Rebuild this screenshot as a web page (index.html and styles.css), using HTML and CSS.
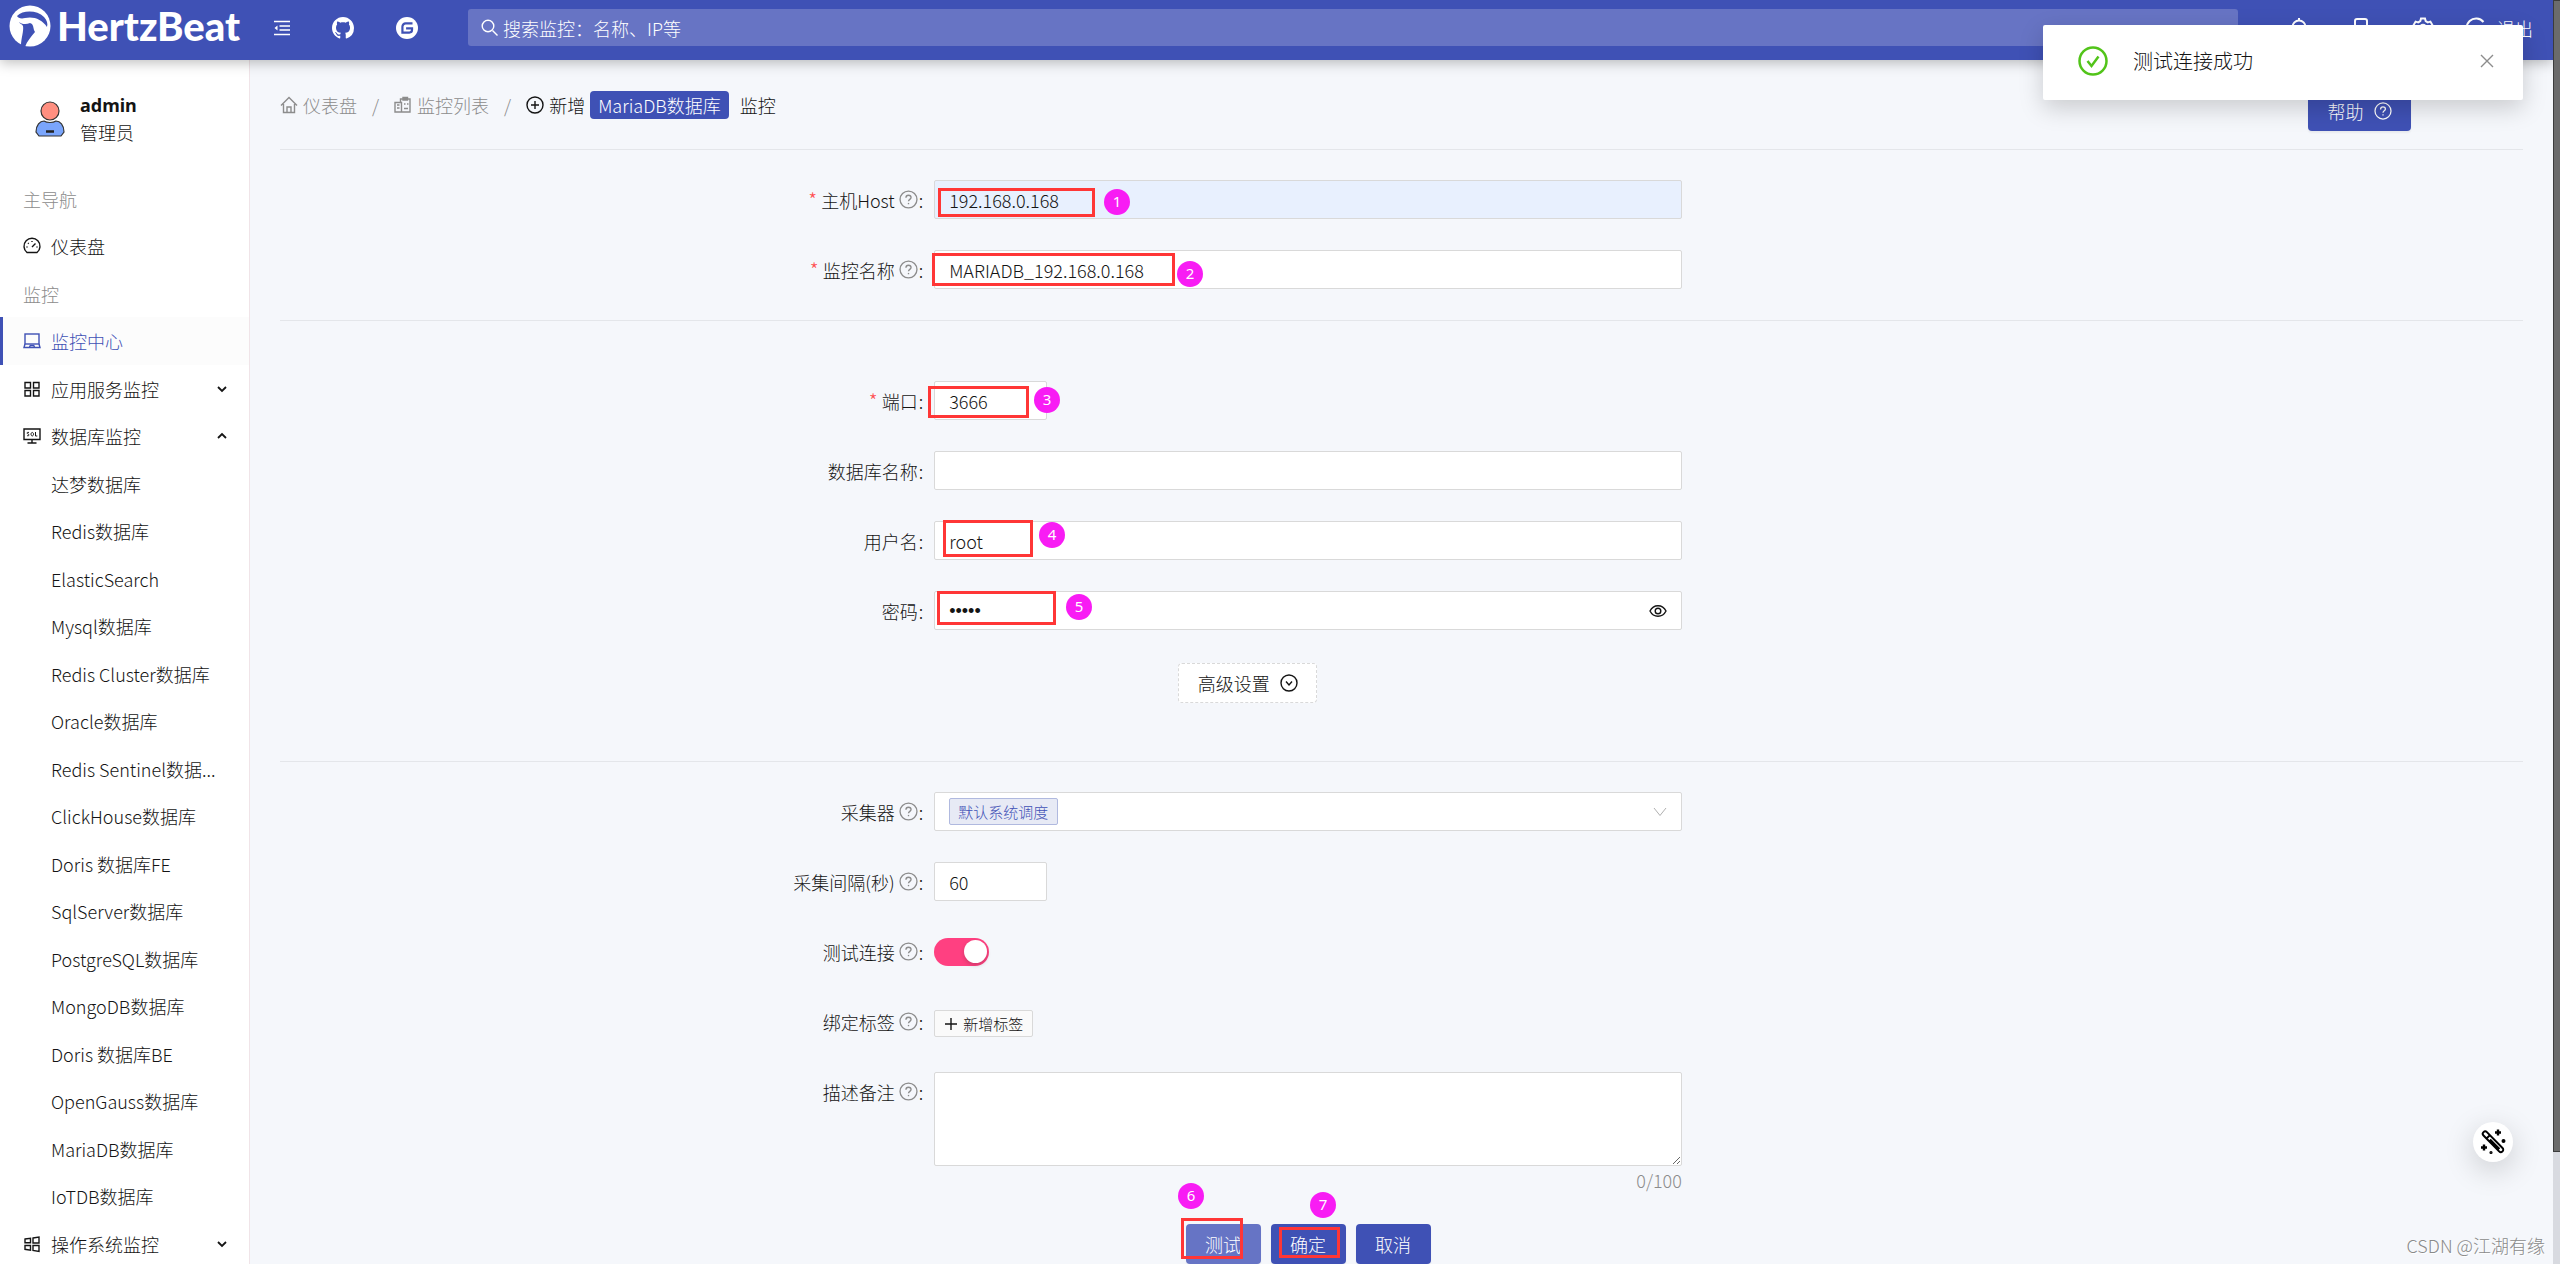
FILE: index.html
```html
<!DOCTYPE html>
<html lang="zh-CN">
<head>
<meta charset="utf-8">
<meta name="viewport" content="width=device-width, initial-scale=1">
<title>HertzBeat</title>
<link rel="stylesheet" href="styles.css">
</head>
<body>
<svg class="sprite" aria-hidden="true">
  <symbol id="i-help" viewBox="0 0 20 20"><circle cx="10" cy="10" r="8.900"/><path d="M7.300 8.200c0-1.700 1.200-2.700 2.700-2.700s2.700 1 2.700 2.400c0 1.900-2.700 2-2.700 4"/><path d="M10 13.600v1.400"/></symbol>
  <symbol id="i-down" viewBox="0 0 12 12"><path d="M2 4l4 4 4-4"/></symbol>
  <symbol id="i-wide" viewBox="0 0 14 12"><path d="M1 2l6 7.500L13 2"/></symbol>
  <symbol id="i-up" viewBox="0 0 12 12"><path d="M2 8l4-4 4 4"/></symbol>
</svg>

<header class="topbar">
  <a class="brand" href="#" aria-label="HertzBeat">
    <svg class="brand-mark" viewBox="0 0 42 42"><circle cx="21" cy="21" r="20.500" fill="#fff"/><path d="M8 11C14 5 28 5 35 12c3 3 4 7 3 10-5-8-14-11-22-9-4 1-7 0-8-2z" fill="#3f51b5"/><path d="M10 17c2 2 7 3 11 1l2 1c2 3 1 5 3 8-4 5-8 9-10 15l-4-1c0-8 3-15 2-20-1-2-3-2-4-4z" fill="#3f51b5"/></svg>
    <span class="brand-name">HertzBeat</span>
  </a>
  <nav class="tools" aria-label="工具">
    <button type="button" aria-label="收起菜单"><svg class="ic16" viewBox="0 0 16 16"><path d="M0 1.500h16M5.500 6H16M5.500 10H16M0 14.500h16" fill="none" stroke="#fff" stroke-width="1.500"/><path d="M3.500 5.500v5L.5 8z" fill="#fff"/></svg></button>
    <a href="#" aria-label="GitHub"><svg class="ic22" viewBox="0 0 16 16"><path fill="#fff" d="M8 0C3.580 0 0 3.580 0 8c0 3.540 2.290 6.530 5.470 7.590.4.070.55-.17.55-.38 0-.19-.01-.82-.01-1.490-2.010.37-2.530-.49-2.690-.94-.09-.23-.48-.94-.82-1.130-.28-.15-.68-.52-.01-.53.63-.01 1.080.58 1.230.82.72 1.210 1.870.87 2.330.66.07-.52.28-.87.51-1.070-1.780-.2-3.640-.89-3.640-3.950 0-.87.31-1.590.82-2.150-.08-.2-.36-1.020.08-2.120 0 0 .67-.21 2.200.82.64-.18 1.320-.27 2-.27s1.360.09 2 .27c1.530-1.040 2.200-.82 2.200-.82.44 1.100.16 1.920.08 2.120.51.56.82 1.270.82 2.150 0 3.070-1.870 3.750-3.650 3.950.29.25.54.73.54 1.480 0 1.070-.01 1.930-.01 2.200 0 .21.15.46.55.38A8 8 0 0 0 16 8c0-4.420-3.580-8-8-8z"/></svg></a>
    <a href="#" aria-label="Gitee"><svg class="ic22" viewBox="0 0 24 24"><circle cx="12" cy="12" r="12" fill="#fff"/><path d="M18 7h-7.500A3.500 3.500 0 0 0 7 10.500V17h7.500a3 3 0 0 0 3-3v-1.500H11" fill="none" stroke="#3f51b5" stroke-width="2.400"/></svg></a>
  </nav>
  <label class="search">
    <svg class="ic18" viewBox="0 0 18 18"><circle cx="7" cy="7" r="5.800"/><path d="M11.500 11.500l5 5"/></svg>
    <input type="search" placeholder="搜索监控：名称、IP等" aria-label="搜索监控">
  </label>
  <nav class="account" aria-label="账户">
    <div class="icons">
      <a href="#" aria-label="通知"><svg class="ic22" viewBox="0 0 22 22"><path d="M11 1v2M4.500 17V10a6.500 6.500 0 0 1 13 0v7M2 17.500h18"/></svg></a>
      <a href="#" aria-label="手机"><svg class="ic22" viewBox="0 0 22 22"><rect x="5" y="2" width="12" height="18" rx="2"/></svg></a>
      <a href="#" aria-label="设置"><svg class="ic22" viewBox="0 0 22 22"><path d="M9 1.500h4l.7 2.700 2 1.200 2.700-.8 2 3.400-2 2v2l2 2-2 3.400-2.700-.8-2 1.200-.7 2.700H9l-.7-2.700-2-1.200-2.700.8-2-3.400 2-2v-2l-2-2 2-3.400 2.700.8 2-1.200z"/><circle cx="11" cy="11" r="3.200"/></svg></a>
    </div>
    <a class="logout" href="#"><svg class="ic22" viewBox="0 0 22 22"><path d="M18.500 5a9.500 9.500 0 1 0 0 12M10 11h11"/></svg>退出</a>
  </nav>
</header>

<div class="body">
  <aside class="side">
    <div class="user">
      <svg class="avatar" viewBox="0 0 30 36"><circle cx="15" cy="10" r="9" fill="#ff8f80" stroke="#333" stroke-width="1.200"/><path d="M1 31c0-7 4-11 8-11 3 2 9 2 12 0 4 0 8 4 8 11l-3 4H4z" fill="#7aa5fb" stroke="#333" stroke-width="1.200"/><path d="M11 30.500h8" stroke="#222" stroke-width="2.500"/></svg>
      <div><strong>admin</strong><span>管理员</span></div>
    </div>
    <ul class="menu">
      <li class="group">主导航</li>
      <li><a href="#"><svg class="ic18" viewBox="0 0 18 18"><path d="M4 15.500a8 8 0 1 1 10 0zM9 10l3.500-3.500M3.500 10h1M13.500 10h1M9 4v1M5 6l.7.7"/></svg>仪表盘</a></li>
      <li class="group">监控</li>
      <li class="active"><a href="#"><svg class="ic18" viewBox="0 0 18 18"><rect x="2" y="2" width="14" height="10"/><path d="M2 12l-1 3.500h16L16 12M6.500 15l.8-1.500h3.400l.8 1.500"/></svg>监控中心</a></li>
      <li><a href="#"><svg class="ic18" viewBox="0 0 18 18"><path d="M2 2.500h5.500V8H2zM10.500 2.500H16V8h-5.500zM2 10.500h5.500V16H2zM10.500 10.500H16V16h-5.500z"/></svg>应用服务监控<svg class="chev"><use href="#i-down"/></svg></a></li>
      <li><a href="#"><svg class="ic18" viewBox="0 0 18 18"><path d="M1 2h16v10.500H1zM9 12.500V16M4.500 16h9"/><path d="M6 5.500c-1.500-.5-2 0-1.800.8.2.8 1.800.6 1.800 1.700 0 .8-1.200 1-2 .5M8 7.200c0-2.300 2.500-2.300 2.500 0s-2.500 2.300-2.500 0M12.500 5v4h1.800" stroke-width="1"/></svg>数据库监控<svg class="chev"><use href="#i-up"/></svg></a></li>
      <li><a class="sub" href="#">达梦数据库</a></li>
      <li><a class="sub" href="#">Redis数据库</a></li>
      <li><a class="sub" href="#">ElasticSearch</a></li>
      <li><a class="sub" href="#">Mysql数据库</a></li>
      <li><a class="sub" href="#">Redis Cluster数据库</a></li>
      <li><a class="sub" href="#">Oracle数据库</a></li>
      <li><a class="sub" href="#">Redis Sentinel数据...</a></li>
      <li><a class="sub" href="#">ClickHouse数据库</a></li>
      <li><a class="sub" href="#">Doris 数据库FE</a></li>
      <li><a class="sub" href="#">SqlServer数据库</a></li>
      <li><a class="sub" href="#">PostgreSQL数据库</a></li>
      <li><a class="sub" href="#">MongoDB数据库</a></li>
      <li><a class="sub" href="#">Doris 数据库BE</a></li>
      <li><a class="sub" href="#">OpenGauss数据库</a></li>
      <li><a class="sub" href="#">MariaDB数据库</a></li>
      <li><a class="sub" href="#">IoTDB数据库</a></li>
      <li><a href="#"><svg class="ic18" viewBox="0 0 18 18"><path d="M2 4l5.500-.8v4.600H2zM10 3l6-1v6h-6zM2 10.500h5.500v4.600L2 14.300zM10 10.500h6v6l-6-1z"/></svg>操作系统监控<svg class="chev"><use href="#i-down"/></svg></a></li>
    </ul>
  </aside>

  <main class="main">
    <div class="head">
      <nav class="crumbs" aria-label="面包屑">
        <a href="#"><svg class="ic18" viewBox="0 0 18 18"><path d="M1 9.500L9 1.500l8 8M3.500 8v8.500h11V8M7 16.500V11h4v5.500"/></svg>仪表盘</a>
        <span class="sep">/</span>
        <a href="#"><svg class="ic18" viewBox="0 0 18 18"><path d="M6.500 6V3H16v13H1V6.500h6.500V16M9 1.500h4.500V4H9zM3 9h2.500M3 12h2.500M10 8h1.500M13 8h1.500M10 12.500h4"/></svg>监控列表</a>
        <span class="sep">/</span>
        <span class="here"><svg class="ic18" viewBox="0 0 18 18"><circle cx="9" cy="9" r="8"/><path d="M9 5v8M5 9h8"/></svg>新增<b class="pill">MariaDB数据库</b>监控</span>
      </nav>
      <button class="btn help" type="button">帮助<svg class="ic18"><use href="#i-help"/></svg></button>
    </div>

    <form class="form">
      <section class="block">
        <div class="row"><label class="lab req" for="host">主机Host<svg class="q"><use href="#i-help"/></svg></label><input class="inp filled" id="host" type="text" value="192.168.0.168"></div>
        <div class="row"><label class="lab req" for="name">监控名称<svg class="q"><use href="#i-help"/></svg></label><input class="inp" id="name" type="text" value="MARIADB_192.168.0.168"></div>
      </section>
      <section class="block params">
        <div class="row"><label class="lab req" for="port">端口</label><input class="inp short" id="port" type="text" value="3666"></div>
        <div class="row"><label class="lab" for="db">数据库名称</label><input class="inp" id="db" type="text"></div>
        <div class="row"><label class="lab" for="user">用户名</label><input class="inp" id="user" type="text" value="root"></div>
        <div class="row"><label class="lab" for="pwd">密码</label><div class="inp pwd"><input id="pwd" type="password" value="admin"><button type="button" aria-label="显示密码"><svg class="ic18" viewBox="0 0 18 18"><path d="M1 9c3.500-7 12.500-7 16 0-3.500 7-12.500 7-16 0z"/><circle cx="9" cy="9" r="2.800"/></svg></button></div></div>
        <div class="row"><div class="ctl adv"><button class="more" type="button">高级设置<svg class="ic18" viewBox="0 0 18 18"><circle cx="9" cy="9" r="8"/><path d="M6 7.500l3 3.500 3-3.500"/></svg></button></div></div>
      </section>
      <section class="block last">
        <div class="row"><label class="lab" for="collector">采集器<svg class="q"><use href="#i-help"/></svg></label><div class="inp sel"><select id="collector"><option>默认系统调度</option></select><svg class="arrow"><use href="#i-wide"/></svg></div></div>
        <div class="row"><label class="lab" for="gap">采集间隔(秒)<svg class="q"><use href="#i-help"/></svg></label><input class="inp short" id="gap" type="text" value="60"></div>
        <div class="row"><label class="lab" for="detect">测试连接<svg class="q"><use href="#i-help"/></svg></label><div class="ctl"><input class="switch" id="detect" type="checkbox" checked></div></div>
        <div class="row"><label class="lab" for="tag">绑定标签<svg class="q"><use href="#i-help"/></svg></label><div class="ctl"><button class="addtag" id="tag" type="button"><svg class="plus" viewBox="0 0 14 14"><path d="M7 1v12M1 7h12"/></svg>新增标签</button></div></div>
        <div class="row"><label class="lab" for="desc">描述备注<svg class="q"><use href="#i-help"/></svg></label><div class="note"><textarea class="inp" id="desc"></textarea><span class="count">0/100</span></div></div>
        <div class="row"><div class="ctl actions"><button class="btn busy" type="button">测试</button><button class="btn" type="submit">确定</button><button class="btn" type="button">取消</button></div></div>
      </section>
    </form>
  </main>
</div>

<div class="toast" role="status">
  <svg class="ok" viewBox="0 0 30 30"><circle cx="15" cy="15" r="13.500"/><path d="M9.500 15l4 5 7-9.500"/></svg>
  <span>测试连接成功</span>
  <button type="button" aria-label="关闭"><svg class="x" viewBox="0 0 14 14"><path d="M1 1l12 12M13 1L1 13"/></svg></button>
</div>

<button class="wand" type="button" aria-label="主题"><svg viewBox="0 0 26 26"><path d="M3.500 6.500a2.400 2.400 0 0 1 3.400-3.400L22.500 19a2.400 2.400 0 0 1-3.400 3.400zM6.500 9.500l3.400-3.400M10 10.500l9.500 9.500"/><path d="M18 .5v6M15 3.500h6M4 15.500v6M1 18.500h6" stroke-width="2.400"/><circle cx="23.500" cy="12" r="1" fill="#000"/><circle cx="11" cy="23.500" r=".6" fill="#000"/></svg></button>
<div class="track"><div class="thumb"></div></div>

<div class="marks">
  <i class="box b1"></i><i class="num n1">1</i>
  <i class="box b2"></i><i class="num n2">2</i>
  <i class="box b3"></i><i class="num n3">3</i>
  <i class="box b4"></i><i class="num n4">4</i>
  <i class="box b5"></i><i class="num n5">5</i>
  <i class="box b6"></i><i class="num n6">6</i>
  <i class="box b7"></i><i class="num n7">7</i>
  <span class="credit">CSDN @江湖有缘</span>
</div>
</body>
</html>
```
FILE: styles.css
```css
* { box-sizing: border-box; }
html, body { height: 100%; }
body {
  margin: 0;
  position: relative;
  padding-right: 7px;
  overflow: hidden;
  background: #f5f7fb;
  color: #141414;
  font: 300 18px/28px "Noto Sans CJK SC", "Noto Sans", sans-serif;
}
a { color: inherit; text-decoration: none; }
button, input, select, textarea { font: inherit; color: inherit; }
button { margin: 0; padding: 0; border: 0; background: none; cursor: pointer; }
ul { margin: 0; padding: 0; list-style: none; }
svg { flex: none; fill: none; stroke: currentColor; stroke-width: 1.4; }
.sprite { position: absolute; width: 0; height: 0; }
.ic16 { width: 16px; height: 16px; stroke: none; }
.ic18 { width: 18px; height: 18px; }
.ic22 { width: 22px; height: 22px; }

/* top bar */
.topbar {
  position: relative;
  z-index: 1;
  display: flex;
  align-items: flex-start;
  height: 60px;
  padding-left: 9px;
  background: #3f51b5;
  color: #fff;
  box-shadow: 0 3px 12px rgba(0, 0, 0, .25);
}
.brand { display: flex; gap: 6px; align-items: center; width: 265px; height: 52px; }
.brand svg { stroke: none; }
.brand-mark { width: 42px; height: 42px; }
.brand-name { font: 900 40px/52px Lato, sans-serif; }
.tools { display: flex; gap: 42px; align-items: center; width: 194px; height: 56px; }
.tools svg { display: block; }
.tools a svg { stroke: none; }
.search {
  display: flex;
  flex: 1;
  gap: 4px;
  align-items: center;
  height: 37px;
  margin-top: 9px;
  padding: 0 13px;
  border-radius: 3px;
  background: #6774c4;
}
.search input { flex: 1; padding: 0; border: 0; outline: 0; background: none; }
.search input::placeholder { color: #fff; opacity: 1; }
.account { display: flex; gap: 31px; align-items: center; height: 56px; padding: 0 20px 0 50px; }
.icons { display: flex; gap: 40px; }
.account svg { display: block; stroke-width: 2; }
.logout { display: flex; gap: 10px; }
.logout svg { margin-top: 3px; }

/* side menu */
.body { display: flex; }
.side { width: 250px; border-right: 1px solid #f0e4e8; background: #fff; }
.user { display: flex; gap: 15px; align-items: center; height: 115px; padding: 2px 0 0 35px; }
.user > div { display: grid; }
.user strong { font: 700 18px/26px "Noto Sans", sans-serif; }
.avatar { width: 30px; height: 36px; }
.menu li { display: flex; height: 47px; }
.menu li:nth-child(even) { height: 48px; }
.menu a { display: flex; flex: 1; gap: 10px; align-items: center; padding: 0 21px 0 23px; }
.menu .sub { padding-left: 51px; }
.menu .group { align-items: center; padding-left: 23px; color: #8c8c8c; }
.menu .active { border-left: 3px solid #3f51b5; background: #fcfcfc; color: #3f51b5; }
.menu .active a { padding-left: 20px; }
.chev { width: 12px; height: 12px; margin-left: auto; stroke-width: 1.8; }

/* page head */
.main { flex: 1; padding: 0 30px; }
.head {
  display: flex;
  justify-content: space-between;
  align-items: center;
  height: 90px;
  border-bottom: 1px solid #e4e6ea;
}
.crumbs { display: flex; gap: 15px; align-items: center; }
.crumbs a, .here { display: flex; gap: 5px; align-items: center; color: #8c8c8c; }
.crumbs .here { color: #141414; }
.sep { color: #8c8c8c; }
.pill { margin-right: 6px; padding: 0 8px; border-radius: 4px; background: #3f51b5; color: #fff; font-weight: 300; }
.btn {
  width: 75px;
  height: 40px;
  border-radius: 4px;
  background: #3f51b5;
  color: #fff;
  box-shadow: 0 2px 2px rgba(0, 0, 0, .05);
}
.help { display: flex; gap: 10px; justify-content: center; align-items: center; width: 103px; margin: 12px 112px 0 0; }

/* form */
.block { display: grid; gap: 31px; padding: 30px 0 31px; border-bottom: 1px solid #e4e6ea; }
.params { padding: 60px 0 58px; }
.last { border: 0; }
.row { display: grid; grid-template-columns: 7fr 8fr 9fr; min-height: 39px; }
.lab { display: flex; gap: 4px; justify-content: flex-end; align-items: center; height: 39px; padding-right: 11px; }
.lab::after { content: ":"; margin-left: -3px; }
.req::before { content: "*"; color: #ff4d4f; font-size: 20px; }
.q { width: 19px; height: 19px; color: #8c8c8c; }
.inp {
  width: 100%;
  height: 39px;
  padding: 0 14px;
  border: 1px solid #d9d9d9;
  border-radius: 2px;
  outline: 0;
  background: #fff;
}
.filled { background: #e8f0fe; }
.short { width: 113px; }
.pwd, .sel { display: flex; align-items: center; justify-content: space-between; }
.pwd input { flex: 1; padding: 0; border: 0; outline: 0; background: none; font-family: "Liberation Sans", sans-serif; }
.pwd svg { display: block; }
.ctl { display: flex; grid-column: 2; align-items: center; }
.adv { padding: 2px 0 0 244px; }
.more {
  display: flex;
  gap: 10px;
  justify-content: center;
  align-items: center;
  width: 139px;
  height: 40px;
  border: 1px dashed #d9d9d9;
  border-radius: 4px;
  background: #fff;
}
.sel select {
  height: 27px;
  padding: 0 8px;
  border: 1px solid #b0b9df;
  border-radius: 2px;
  background: #e7eaf5;
  color: #3f51b5;
  font-size: 15px;
  line-height: 24px;
  appearance: none;
}
.arrow { width: 14px; height: 12px; color: #b0b0b0; stroke-width: 1; }
.switch {
  display: flex;
  align-items: center;
  width: 55px;
  height: 28px;
  margin: 0;
  padding: 0 2px;
  border-radius: 14px;
  background: #ff4081;
  appearance: none;
}
.switch::before {
  content: "";
  width: 23px;
  height: 23px;
  margin-left: auto;
  border-radius: 50%;
  background: #fff;
  box-shadow: 0 2px 4px rgba(0, 35, 11, .2);
}
.addtag {
  display: flex;
  gap: 5px;
  align-items: center;
  height: 27px;
  margin-top: 4px;
  padding: 0 9px;
  border: 1px solid #d9d9d9;
  border-radius: 2px;
  background: #fafafa;
  font-size: 15px;
}
.plus { width: 14px; height: 14px; }
.note { display: grid; justify-items: end; }
.note textarea { display: block; height: 94px; resize: vertical; }
.count { height: 27px; color: #8c8c8c; }
.actions { gap: 10px; justify-content: center; }
.busy { background: #6674c5; }

/* floating layers */
.toast {
  position: absolute;
  z-index: 2;
  top: 25px;
  right: 37px;
  display: flex;
  gap: 25px;
  align-items: center;
  width: 480px;
  height: 75px;
  padding: 0 29px 4px 35px;
  border-radius: 2px;
  background: #fff;
  font-size: 20px;
  box-shadow: 0 8px 24px rgba(0, 0, 0, .18);
}
.toast svg { display: block; }
.ok { width: 30px; height: 30px; color: #52c41a; stroke-width: 2.5; }
.x { width: 14px; height: 14px; color: #8c8c8c; }
.toast button { margin-left: auto; }
.wand {
  position: absolute;
  right: 47px;
  bottom: 102px;
  display: grid;
  place-items: center;
  width: 40px;
  height: 40px;
  border-radius: 50%;
  background: #fff;
  color: #000;
  box-shadow: 0 8px 30px rgba(0, 0, 0, .18);
}
.wand svg { width: 26px; height: 26px; stroke-width: 2; }
.track { position: absolute; z-index: 2; top: 0; right: 0; width: 7px; height: 100%; background: #d8dae0; }
.thumb { height: 1152px; border: 1px solid #3c3c3c; border-right: 0; background: #6b6b6b; }

/* numbered marks over the form */
.marks { position: absolute; z-index: 3; inset: 0; pointer-events: none; }
.box { position: absolute; border: 3px solid #ff3636; }
.num {
  position: absolute;
  width: 26px;
  height: 26px;
  border-radius: 50%;
  background: #f81cf4;
  color: #fff;
  font: 400 15px/25px "Noto Sans", sans-serif;
  text-align: center;
}
.b1 { left: 938px; top: 188px; width: 157px; height: 29px; }
.n1 { left: 1104px; top: 189px; }
.b2 { left: 932px; top: 253px; width: 243px; height: 33px; }
.n2 { left: 1177px; top: 261px; }
.b3 { left: 928px; top: 386px; width: 101px; height: 32px; }
.n3 { left: 1034px; top: 387px; }
.b4 { left: 943px; top: 520px; width: 90px; height: 37px; }
.n4 { left: 1039px; top: 522px; }
.b5 { left: 937px; top: 591px; width: 119px; height: 34px; }
.n5 { left: 1066px; top: 594px; }
.b6 { left: 1181px; top: 1218px; width: 62px; height: 41px; }
.n6 { left: 1178px; top: 1183px; }
.b7 { left: 1279px; top: 1227px; width: 61px; height: 31px; }
.n7 { left: 1310px; top: 1192px; }
.credit { position: absolute; right: 15px; bottom: 5px; color: #8a8a8a; text-shadow: 1px 1px 0 #fff; }
```
